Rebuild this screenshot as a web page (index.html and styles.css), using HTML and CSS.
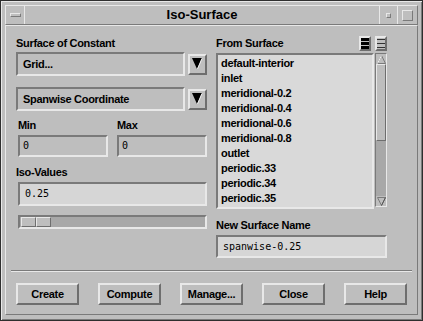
FILE: index.html
```html
<!DOCTYPE html>
<html lang="en">
<head>
    <meta charset="UTF-8">
    <title>Iso-Surface</title>
    <link rel="stylesheet" href="styles.css">
</head>
<body>
    <div class="window">
        <div class="titlebar">
            <div class="tb-btn tb-menu"><span class="menu-bar"></span></div>
            <div class="title">Iso-Surface</div>
            <div class="tb-btn tb-min"><span class="min-box"></span></div>
            <div class="tb-btn tb-max"><span class="max-box"></span></div>
        </div>

        <div class="panel">
            <div class="columns">
                <div class="col-left">
                    <div class="label">Surface of Constant</div>
                    <div class="combo-row">
                        <div class="combo">Grid...</div>
                        <div class="combo-btn">
                            <svg width="11" height="12" viewBox="0 0 11 12">
                                <polygon points="0,0 10,0 5,11" fill="#000"/>
                                <line x1="10" y1="0.5" x2="5.5" y2="11" stroke="#f0f0f0" stroke-width="1"/>
                            </svg>
                        </div>
                    </div>
                    <div class="combo-row second">
                        <div class="combo">Spanwise Coordinate</div>
                        <div class="combo-btn">
                            <svg width="11" height="12" viewBox="0 0 11 12">
                                <polygon points="0,0 10,0 5,11" fill="#000"/>
                                <line x1="10" y1="0.5" x2="5.5" y2="11" stroke="#f0f0f0" stroke-width="1"/>
                            </svg>
                        </div>
                    </div>

                    <div class="minmax">
                        <div class="minmax-item">
                            <div class="label">Min</div>
                            <div class="field field-dim">0</div>
                        </div>
                        <div class="minmax-item">
                            <div class="label">Max</div>
                            <div class="field field-dim">0</div>
                        </div>
                    </div>

                    <div class="label iso-label">Iso-Values</div>
                    <div class="field field-iso">0.25</div>

                    <div class="slider">
                        <div class="slider-thumb"><span></span><span></span></div>
                    </div>
                </div>

                <div class="col-right">
                    <div class="list-head">
                        <span class="label">From Surface</span>
                        <span class="sel-icon sel-all">
                            <svg width="8" height="11" viewBox="0 0 8 11">
                                <rect x="0" y="0" width="8" height="3" fill="#000"/>
                                <rect x="0" y="4" width="8" height="3" fill="#000"/>
                                <rect x="0" y="8" width="8" height="3" fill="#000"/>
                            </svg>
                        </span>
                        <span class="sel-icon sel-none">
                            <svg width="8" height="11" viewBox="0 0 8 11">
                                <rect x="0" y="1" width="8" height="1" fill="#333"/>
                                <rect x="0" y="5" width="8" height="1" fill="#333"/>
                                <rect x="0" y="9" width="8" height="1" fill="#333"/>
                            </svg>
                        </span>
                    </div>
                    <div class="list-row">
                        <ul class="list">
                            <li>default-interior</li>
                            <li>inlet</li>
                            <li>meridional-0.2</li>
                            <li>meridional-0.4</li>
                            <li>meridional-0.6</li>
                            <li>meridional-0.8</li>
                            <li>outlet</li>
                            <li>periodic.33</li>
                            <li>periodic.34</li>
                            <li>periodic.35</li>
                        </ul>
                        <div class="scrollbar">
                            <div class="arrow">
                                <svg width="9" height="9" viewBox="0 0 9 9">
                                    <polygon points="4.5,0.5 8.5,8.5 0.5,8.5" fill="#bebebe" stroke="#7a7a7a"/>
                                    <line x1="4.5" y1="0.5" x2="0.5" y2="8.5" stroke="#eeeeee"/>
                                </svg>
                            </div>
                            <div class="scroll-thumb"></div>
                            <div class="scroll-space"></div>
                            <div class="arrow">
                                <svg width="9" height="9" viewBox="0 0 9 9">
                                    <polygon points="0.5,0.5 8.5,0.5 4.5,8.5" fill="#bebebe" stroke="#7a7a7a"/>
                                    <line x1="8.5" y1="0.5" x2="4.5" y2="8.5" stroke="#555555"/>
                                </svg>
                            </div>
                        </div>
                    </div>
                    <div class="label name-label">New Surface Name</div>
                    <div class="field field-name">spanwise-0.25</div>
                </div>
            </div>

            <div class="separator"></div>

            <div class="buttons">
                <div class="button">Create</div>
                <div class="button">Compute</div>
                <div class="button">Manage...</div>
                <div class="button">Close</div>
                <div class="button">Help</div>
            </div>
        </div>
    </div>
</body>
</html>
```

FILE: styles.css
```css
* {
    box-sizing: border-box;
}
body {
    margin: 0;
    background: #bebebe;
    font-family: "Liberation Sans", Arial, sans-serif;
    color: #000;
}
.window {
    width: 423px;
    height: 321px;
    background: #bebebe;
    border: 1px solid #2e2e2e;
    box-shadow: inset 1px 1px 0 #e8e8e8, inset -1px -1px 0 #7a7a7a;
    padding: 4px 4px 5px 4px;
    display: flex;
    flex-direction: column;
}

/* title bar */
.titlebar {
    height: 20px;
    display: flex;
    border: 1px solid;
    border-color: #e8e8e8 #7a7a7a #7a7a7a #e8e8e8;
}
.tb-btn {
    display: flex;
    align-items: center;
    justify-content: center;
}
.tb-menu {
    width: 19px;
    border-right: 1px solid #e8e8e8;
}
.menu-bar {
    width: 11px;
    height: 4px;
    border: 1px solid;
    border-color: #e8e8e8 #7a7a7a #7a7a7a #e8e8e8;
}
.title {
    flex: 1;
    text-align: center;
    font-weight: bold;
    font-size: 13px;
    line-height: 18px;
}
.tb-min {
    width: 19px;
    border-left: 1px solid #e8e8e8;
    border-right: 1px solid #e8e8e8;
}
.min-box {
    width: 5px;
    height: 5px;
    border: 1px solid;
    border-color: #e8e8e8 #7a7a7a #7a7a7a #e8e8e8;
}
.tb-max {
    width: 19px;
}
.max-box {
    width: 11px;
    height: 11px;
    border: 1px solid;
    border-color: #e8e8e8 #7a7a7a #7a7a7a #e8e8e8;
}

/* main panel */
.panel {
    flex: 1;
    border: 1px solid;
    border-color: #e8e8e8 #7a7a7a #7a7a7a #e8e8e8;
    padding: 11px 0 0 10px;
}
.columns {
    display: flex;
    gap: 9px;
}
.col-left {
    width: 191px;
}
.col-right {
    width: 171px;
    margin-top: -1px;
}
.label {
    font-weight: bold;
    font-size: 11px;
    line-height: 13px;
    letter-spacing: -0.3px;
    white-space: nowrap;
}

/* option menus */
.combo-row {
    display: flex;
    align-items: center;
    gap: 3px;
    margin-top: 2px;
    height: 24px;
}
.combo-row.second {
    margin-top: 11px;
}
.combo {
    width: 169px;
    height: 24px;
    border: 2px solid;
    border-color: #7a7a7a #e8e8e8 #e8e8e8 #7a7a7a;
    padding-left: 5px;
    font-weight: bold;
    font-size: 11px;
    line-height: 20px;
    letter-spacing: -0.3px;
}
.combo-btn {
    width: 19px;
    height: 21px;
    border: 2px solid;
    border-color: #e8e8e8 #6e6e6e #6e6e6e #e8e8e8;
    display: flex;
    align-items: center;
    justify-content: center;
}

/* text fields */
.field {
    border: 2px solid;
    border-color: #7a7a7a #e8e8e8 #e8e8e8 #7a7a7a;
    font-family: "DejaVu Sans Mono", "Liberation Mono", monospace;
    font-size: 10px;
    padding-left: 5px;
}
.field-dim {
    height: 22px;
    line-height: 18px;
    padding-left: 3px;
}
.field-iso {
    margin: 3px 0 0 2px;
    width: 189px;
    height: 24px;
    line-height: 20px;
    background: #d6d6d6;
}
.field-name {
    margin-top: 3px;
    width: 171px;
    height: 23px;
    line-height: 19px;
    background: #d6d6d6;
}
.minmax {
    display: flex;
    gap: 9px;
    margin-top: 8px;
    padding-left: 2px;
}
.minmax-item {
    width: 90px;
}
.minmax-item .field {
    margin-top: 3px;
}
.iso-label {
    margin-top: 9px;
}

/* slider */
.slider {
    margin: 9px 0 0 2px;
    width: 189px;
    height: 14px;
    background: #a8a8a8;
    border: 2px solid;
    border-color: #7a7a7a #e8e8e8 #e8e8e8 #7a7a7a;
    padding-left: 1px;
}
.slider-thumb {
    width: 30px;
    height: 10px;
    display: flex;
}
.slider-thumb span {
    flex: 1;
    background: #bebebe;
    border: 1px solid;
    border-color: #e8e8e8 #6e6e6e #6e6e6e #e8e8e8;
}

/* surface list */
.list-head {
    display: flex;
    align-items: center;
    gap: 4px;
    height: 15px;
}
.list-head .label {
    line-height: 15px;
    margin-right: auto;
}
.sel-icon {
    width: 12px;
    height: 15px;
    border: 2px solid;
    border-color: #e8e8e8 #6e6e6e #6e6e6e #e8e8e8;
    display: flex;
    align-items: center;
    justify-content: center;
}
.list-row {
    display: flex;
    gap: 1px;
    margin-top: 2px;
}
.list {
    list-style: none;
    margin: 0;
    width: 158px;
    height: 156px;
    background: #d9d9d9;
    border: 2px solid;
    border-color: #7a7a7a #e8e8e8 #e8e8e8 #7a7a7a;
    padding: 1px 0 0 3px;
}
.list li {
    font-weight: bold;
    font-size: 11px;
    line-height: 15px;
    letter-spacing: -0.3px;
}
.scrollbar {
    width: 12px;
    height: 154px;
    background: #a8a8a8;
    border: 1px solid;
    border-color: #7a7a7a #e8e8e8 #e8e8e8 #7a7a7a;
    display: flex;
    flex-direction: column;
}
.arrow {
    height: 10px;
    display: flex;
    align-items: center;
    justify-content: center;
    background: #bebebe;
}
.scroll-thumb {
    height: 77px;
    background: #bebebe;
    border: 1px solid;
    border-color: #e8e8e8 #6e6e6e #6e6e6e #e8e8e8;
}
.scroll-space {
    flex: 1;
}
.name-label {
    margin-top: 10px;
}

/* bottom row */
.separator {
    margin: 12px 0 0 -5px;
    width: 401px;
    border-top: 1px solid #7a7a7a;
    border-bottom: 1px solid #e8e8e8;
}
.buttons {
    display: flex;
    gap: 19px;
    margin-top: 11px;
}
.button {
    width: 63px;
    height: 22px;
    border: 2px solid;
    border-color: #e8e8e8 #6e6e6e #6e6e6e #e8e8e8;
    text-align: center;
    font-weight: bold;
    font-size: 11px;
    line-height: 18px;
    letter-spacing: -0.3px;
}
```
